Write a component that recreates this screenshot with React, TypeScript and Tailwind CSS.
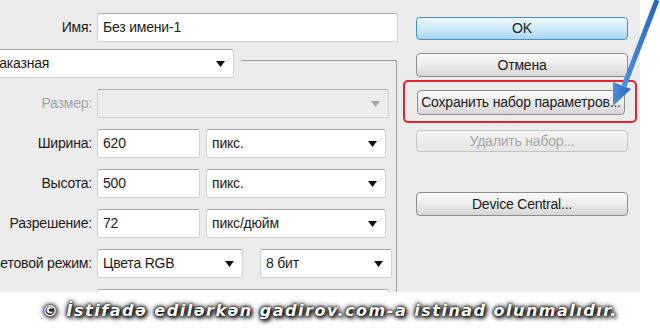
import type { ReactNode } from 'react';

const UI_FONT = "font-['Liberation_Sans','Arial',sans-serif]";

function Caret({ muted }: { muted?: boolean }) {
  return (
    <svg width="9" height="6" viewBox="0 0 9 6" className="shrink-0">
      <path d="M0 0 H9 L4.5 6 Z" fill={muted ? '#a8a8a8' : '#111'} />
    </svg>
  );
}

// white input / select box
function Box({
  w,
  children,
  select,
  disabled,
}: {
  w: string;
  children?: ReactNode;
  select?: boolean;
  disabled?: boolean;
}) {
  return (
    <div
      className={`${w} flex h-full items-center justify-between rounded-[2px] border border-[#d0d0d0] border-t-[#ababab] pl-[5px] pr-[8px] ${
        disabled ? 'bg-[#ececec]' : 'bg-white'
      }`}
    >
      <span className="whitespace-nowrap">{children}</span>
      {select && <Caret muted={disabled} />}
    </div>
  );
}

function Row({ label, muted, children }: { label: string; muted?: boolean; children: ReactNode }) {
  return (
    <div className="flex h-[29px] shrink-0">
      <div
        className={`flex w-[92px] shrink-0 items-center justify-end whitespace-nowrap ${
          muted ? 'text-[#a3a3a3]' : 'text-[#1b1b1b]'
        }`}
      >
        {label}
      </div>
      <div className="ml-[5px] flex gap-[6px]">{children}</div>
    </div>
  );
}

function Button({
  children,
  h,
  primary,
  disabled,
}: {
  children: ReactNode;
  h: string;
  primary?: boolean;
  disabled?: boolean;
}) {
  const look = primary
    ? 'border-[#4a8fc4] bg-gradient-to-b from-[#eef8fe] via-[#cfeafb] to-[#a9d6f3]'
    : disabled
      ? 'border-[#c4c4c4] bg-gradient-to-b from-[#f3f3f3] to-[#e6e6e6] text-[#a6a6a6]'
      : 'border-[#8d8d8d] bg-gradient-to-b from-[#fbfbfb] via-[#ececec] to-[#d6d6d6]';
  return (
    <div
      className={`${h} flex w-full items-center justify-center whitespace-nowrap rounded-[4px] border ${look}`}
    >
      {children}
    </div>
  );
}

export default function App() {
  return (
    <div
      className={`relative h-[330px] w-[660px] overflow-hidden bg-white text-[14px] tracking-[-0.2px] text-[#1b1b1b] ${UI_FONT}`}
    >
      <div className="flex h-[292px] w-[640px] overflow-hidden bg-[#ececec]">
        {/* left: fields */}
        <div className="flex w-[397px] shrink-0 flex-col pt-[13px]">
          <Row label="Имя:">
            <Box w="w-[301px]">Без имени-1</Box>
          </Row>

          <div className="mt-[18px] flex shrink-0 flex-col gap-[11px] border-t border-r border-[#9c9c9c]">
            <div className="-mt-[12px] -ml-[15px] w-fit shrink-0 bg-[#ececec] pr-[7px]">
              <div className="h-[29px]">
                <Box w="w-[249px]" select>
                  Заказная
                </Box>
              </div>
            </div>

            <Row label="Размер:" muted>
              <Box w="w-[292px]" select disabled />
            </Row>
            <Row label="Ширина:">
              <Box w="w-[103px]">620</Box>
              <Box w="w-[180px]" select>
                пикс.
              </Box>
            </Row>
            <Row label="Высота:">
              <Box w="w-[103px]">500</Box>
              <Box w="w-[180px]" select>
                пикс.
              </Box>
            </Row>
            <Row label="Разрешение:">
              <Box w="w-[103px]">72</Box>
              <Box w="w-[180px]" select>
                пикс/дюйм
              </Box>
            </Row>
            <Row label="Цветовой режим:">
              <Box w="w-[146px]" select>
                Цвета RGB
              </Box>
              <div className="w-[5px]" />
              <Box w="w-[132px]" select>
                8 бит
              </Box>
            </Row>
            <Row label="">
              <Box w="w-[292px]" />
            </Row>
          </div>
        </div>

        {/* right: buttons */}
        <div className="ml-[19px] flex w-[212px] shrink-0 flex-col pt-[17px]">
          <Button h="h-[23px]" primary>
            OK
          </Button>
          <div className="mt-[13px]">
            <Button h="h-[24px]">Отмена</Button>
          </div>
          <div className="mt-[3px] -ml-[13px] w-[234px] rounded-[5px] border-2 border-[#e3262b] pt-[8px] pr-[10px] pb-[6px] pl-[12px]">
            <Button h="h-[25px]">Сохранить набор параметров...</Button>
          </div>
          <div className="mt-[7px]">
            <Button h="h-[22px]" disabled>
              Удалить набор...
            </Button>
          </div>
          <div className="mt-[40px]">
            <Button h="h-[24px]">Device Central...</Button>
          </div>
        </div>
      </div>

      {/* blue annotation arrow */}
      <svg className="absolute top-0 left-[600px]" width="60" height="115" viewBox="0 0 60 115">
        <defs>
          <linearGradient id="arr" x1="0" y1="0" x2="1" y2="0">
            <stop offset="0" stopColor="#4d8fdc" />
            <stop offset="1" stopColor="#2a64b8" />
          </linearGradient>
        </defs>
        <line x1="57" y1="0" x2="24" y2="86" stroke="url(#arr)" strokeWidth="5" />
        <polygon points="13,106 13,82 31,89" fill="url(#arr)" />
      </svg>

      {/* watermark */}
      <div className="flex h-[38px] items-center justify-center font-['DejaVu_Sans',sans-serif] text-[16px] font-bold italic tracking-[1.5px] text-white [text-shadow:0_0_2px_#000,0_0_4px_#000,2px_2px_4px_#000,0_0_6px_#222]">
        © İstifadə edilərkən gadirov.com-a istinad olunmalıdır.
      </div>
    </div>
  );
}
